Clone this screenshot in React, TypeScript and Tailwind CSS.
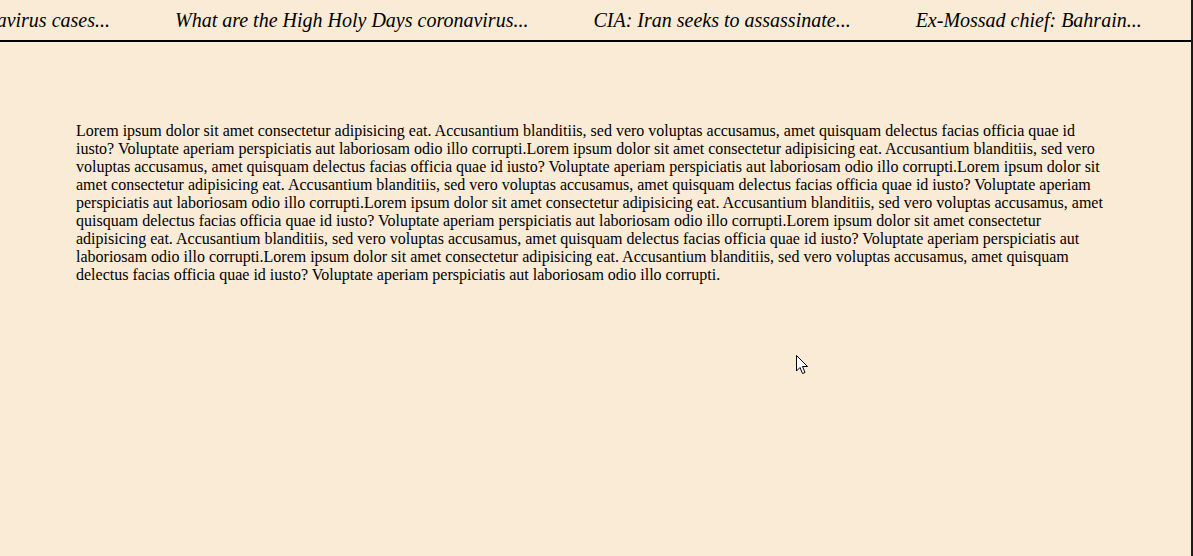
import React from "react";

const headlines = [
  "Israel's coronavirus cases...",
  "What are the High Holy Days coronavirus...",
  "CIA: Iran seeks to assassinate...",
  "Ex-Mossad chief: Bahrain...",
];

const chunk =
  "Lorem ipsum dolor sit amet consectetur adipisicing eat. Accusantium blanditiis, sed vero voluptas accusamus, amet quisquam delectus facias officia quae id iusto? Voluptate aperiam perspiciatis aut laboriosam odio illo corrupti.";

export default function App() {
  return (
    <div className="relative h-[556px] w-[1193px] overflow-hidden bg-[#faebd7] border-r-2 border-[#1a1a1a] text-black font-['Liberation_Serif','Times_New_Roman',serif]">
      <div className="h-[42px] border-b-2 border-black overflow-hidden">
        <div className="flex h-[40px] items-center whitespace-nowrap gap-[65px] italic text-[20px] -translate-x-[113px]">
          {headlines.map((h) => (
            <span key={h}>{h}</span>
          ))}
        </div>
      </div>
      <p className="mt-[80px] px-[76px] text-[16px] leading-[18px]">
        {Array(6).fill(chunk).join("")}
      </p>
      <svg
        className="absolute left-[796px] top-[355px]"
        width="13"
        height="20"
        viewBox="0 0 13 20"
      >
        <path
          d="M0.5 0.5 L0.5 16 L4 12.5 L6.5 18.5 L9 17.5 L6.5 11.5 L11.5 11.5 Z"
          fill="white"
          stroke="black"
          strokeWidth="1"
        />
      </svg>
    </div>
  );
}
